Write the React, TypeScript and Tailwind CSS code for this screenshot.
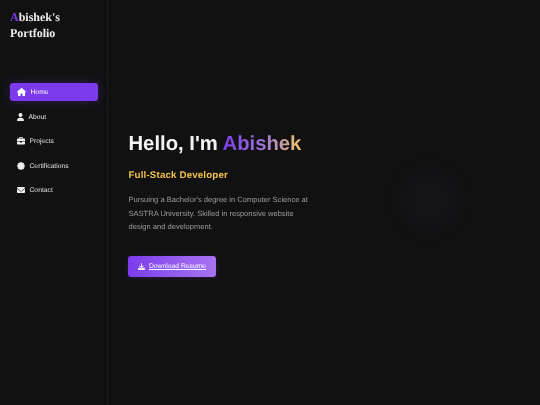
import { FaHouse, FaUser, FaBriefcase, FaCertificate, FaEnvelope, FaDownload } from "react-icons/fa6";

const items = [
  { label: "About", Icon: FaUser, size: "w-[7px]" },
  { label: "Projects", Icon: FaBriefcase, size: "w-[8px]" },
  { label: "Certifications", Icon: FaCertificate, size: "w-[8px]" },
  { label: "Contact", Icon: FaEnvelope, size: "w-[8px]" },
];

export default function App() {
  return (
    <div className="relative h-[405px] w-[540px] overflow-hidden bg-[#111112]">
      <div className="flex h-full w-full font-['Liberation_Sans',sans-serif] blur-[0.35px] [text-rendering:geometricPrecision]">
        <aside className="flex h-full w-[108px] shrink-0 flex-col border-r border-r-[#1b1b1d] pl-[10px] pr-[10px] pt-[10px]">
          <h1 className="font-['Liberation_Serif',serif] text-[12px] font-bold leading-[15.5px] text-[#eeeeee]">
            <span className="text-[#7c3aed]">A</span>bishek's
            <br />
            Portfolio
          </h1>
          <nav className="mt-[42px] flex flex-col">
            <a className="flex h-[18px] w-[88px] items-center gap-[4.5px] rounded-[3px] bg-[#7c3aed] pl-[7px] text-[6.75px] text-white shadow-[0_0_10px_rgba(124,58,237,0.3)]">
              <FaHouse className="h-[8px] w-[9px]" />
              <span className="pt-[2px]">Home</span>
            </a>
            <div className="mt-[7px] flex flex-col gap-[7px]">
              {items.map(({ label, Icon, size }) => (
                <a key={label} className="flex h-[17.5px] items-center gap-[4.5px] pl-[7px] text-[6.75px] text-[#e0e0e0]">
                  <Icon className={`h-[8px] ${size} text-[#eeeeee]`} />
                  <span className="pt-[2px]">{label}</span>
                </a>
              ))}
            </div>
          </nav>
        </aside>
        <main className="relative flex flex-1 flex-col justify-start pl-[20.5px] pt-[131px]">
          <h2 className="text-[20.25px] font-bold leading-[26px] text-[#f3f4f6]">
            Hello, I'm{" "}
            <span className="bg-gradient-to-r from-[#7c3aed] via-[#9f6fd8] to-[#f4c35a] bg-clip-text text-transparent">Abishek</span>
          </h2>
          <p className="mt-[12px] text-[9.75px] font-bold leading-[13px] tracking-[0.15px] text-[#f0c14b]">Full-Stack Developer</p>
          <p className="mt-[11px] w-[186px] text-[7.55px] leading-[13.5px] text-[#9c9ca0]">
            Pursuing a Bachelor's degree in Computer Science at SASTRA University. Skilled in responsive website design and development.
          </p>
          <a className="ml-[-0.5px] mt-[22px] flex h-[21px] w-[88px] items-center justify-center gap-[4px] rounded-[3px] bg-gradient-to-r from-[#7c3aed] to-[#a873f0] text-[6.75px] text-white shadow-[0_1px_4px_rgba(124,58,237,0.2)]">
            <FaDownload className="h-[7px] w-[7px]" />
            <span className="pt-[2px] underline">Download Resume</span>
          </a>
          <div className="absolute left-[292px] top-[170px] h-[60px] w-[60px] rounded-full bg-[#141418] blur-[6px]" />
        </main>
      </div>
    </div>
  );
}
